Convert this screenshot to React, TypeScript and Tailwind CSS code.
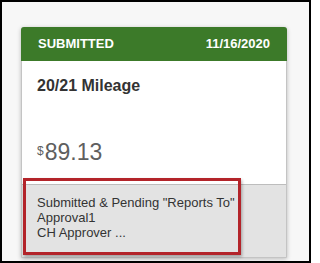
export default function App() {
  return (
    <div className="relative w-[311px] h-[263px] overflow-hidden border-2 border-black bg-[#f7f7f7] pl-[19px] pt-[25px] font-['Liberation_Sans',Arial,sans-serif]">
      <div className="w-[266px] h-[231px] flex flex-col rounded-t-[3px] border border-[#c4c4c4] bg-white shadow-[0_1px_4px_rgba(0,0,0,0.25)]">
        {/* status header */}
        <div className="h-[34px] -mx-px -mt-px flex items-center justify-between rounded-t-[3px] bg-[#3c7a29] px-[17px] text-[13px] font-bold text-white">
          <span>SUBMITTED</span>
          <span>11/16/2020</span>
        </div>

        <div className="px-[15px] pt-[16px] pb-[19px]">
          <div className="text-[16px] leading-[18px] font-bold text-[#333]">20/21 Mileage</div>
          <div className="mt-[44px] flex items-start leading-[26px] text-[#5f5f5f]">
            <span className="text-[12px] leading-[18px] pt-[3px] mr-[1px]">$</span>
            <span className="text-[23px]">89.13</span>
          </div>
        </div>

        <div className="flex-1 border-t border-[#bdbdbd] bg-[#e3e3e3] px-[15px] pt-[10px] text-[13px] leading-[15px] text-[#333]">
          <div>Submitted &amp; Pending "Reports To"</div>
          <div>Approval1</div>
          <div>CH Approver ...</div>
        </div>
      </div>

      {/* annotation box */}
      <div className="absolute left-[21px] top-[176px] w-[218px] h-[77px] border-[3px] border-[#b3242a] shadow-[1px_2px_3px_rgba(0,0,0,0.3)]" />
    </div>
  );
}
